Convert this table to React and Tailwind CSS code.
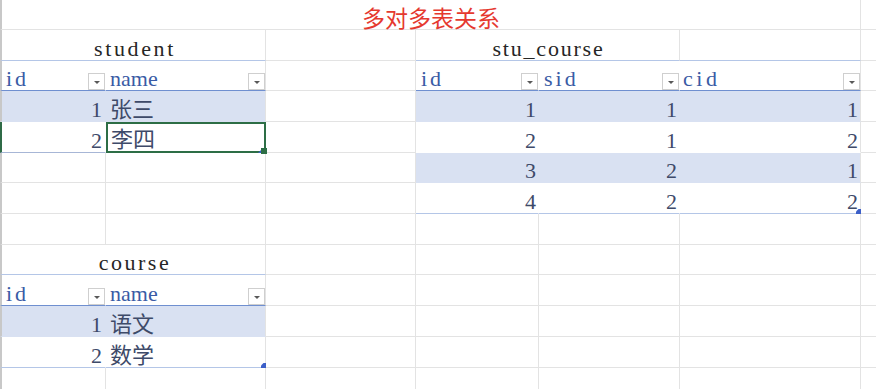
import React from "react";

const L = "border-l-2 border-l-[#c8c8c8]";
const R = "border-r border-r-[#e3e3e3]";
const W = "border-r border-r-white";
const RS = "border-r border-r-[#d9e1f2]";
const B = "border-b border-b-[#e3e3e3]";
const BW = "border-b border-b-white";
const BS = "border-b border-b-[#d9e1f2]";
const BT = "border-b border-b-[#b4c6e7]";
const BH = "border-b border-b-[#6f8fd0]";
const STRIPE = "bg-[#d9e1f2]";
const HEAD = "text-[#3a5ba5]";
const DATA = "text-[#3e4a69]";

function C({ className = "", children }) {
  return <div className={`relative flex items-end ${className}`}>{children}</div>;
}

function DD() {
  return (
    <div className="w-[17px] h-[17px] shrink-0 bg-white border border-[#cfcfcf] flex items-center justify-center">
      <div className="w-0 h-0 mt-[2px] border-l-[3px] border-r-[3px] border-t-[3px] border-l-transparent border-r-transparent border-t-[#595959]" />
    </div>
  );
}

function Handle() {
  return (
    <div className="absolute -right-[1px] -bottom-[1px] w-[5px] h-[5px] bg-[#3c5fc8] [clip-path:polygon(50%_0,100%_0,100%_100%,0_100%,0_50%)]" />
  );
}

function Head({ className, label, track, pad }) {
  return (
    <C className={`${className} ${BH} justify-between ${pad}`}>
      <span className={`${HEAD} ${track}`}>{label}</span>
      <DD />
    </C>
  );
}

export default function App() {
  return (
    <div className="w-[876px] h-[389px] overflow-hidden bg-white font-['Liberation_Serif','Noto_Sans_CJK_SC',serif] text-[22px] leading-none">
      <div className="grid grid-cols-[106px_160px_150px_123px_141px_181px_15px] grid-rows-[30px_31px_30px_31px_31px_30px_31px_31px_30px_31px_31px_31px_21px]">
        {/* Row 1 */}
        <C className={`col-span-6 ${L} ${R} ${B} items-center justify-center`}>
          <span className="font-['Noto_Sans_CJK_SC',sans-serif] text-[23px] text-[#e5392f]">多对多表关系</span>
        </C>
        <C className={B} />

        {/* Row 2 */}
        <C className={`col-span-2 ${L} ${R} ${BT} justify-center pl-[3px] text-[#262626]`}>
          <span className="tracking-[2.6px]">student</span>
        </C>
        <C className={`${R} ${B}`} />
        <C className={`col-span-2 ${R} ${BT} justify-center pl-[2px] text-[#262626]`}>
          <span className="tracking-[1.8px]">stu_course</span>
        </C>
        <C className={`${R} ${BT}`} />
        <C className={B} />

        {/* Row 3 header */}
        <Head className={`${L} ${W}`} label="id" track="tracking-[3px]" pad="pl-[4px]" />
        <Head className={R} label="name" track="" pad="pl-[4px]" />
        <C className={`${R} ${B}`} />
        <Head className={W} label="id" track="tracking-[3px]" pad="pl-[5px]" />
        <Head className={W} label="sid" track="tracking-[3px]" pad="pl-[5px]" />
        <Head className={R} label="cid" track="tracking-[3.5px]" pad="pl-[3px]" />
        <C className={B} />

        {/* Row 4 */}
        <C className={`${L} ${RS} ${BS} ${STRIPE} ${DATA} justify-end pr-[3px]`}>1</C>
        <C className={`${R} ${BS} ${STRIPE} ${DATA} pl-[4px]`}>张三</C>
        <C className={`${R} ${B}`} />
        <C className={`${RS} ${BS} ${STRIPE} ${DATA} justify-end pr-[2px]`}>1</C>
        <C className={`${RS} ${BS} ${STRIPE} ${DATA} justify-end pr-[2px]`}>1</C>
        <C className={`${R} ${BS} ${STRIPE} ${DATA} justify-end pr-[2px]`}>1</C>
        <C className={B} />

        {/* Row 5 */}
        <C className={`border-l-2 border-l-[#2f6b47] ${W} border-b border-b-[#a7b6d6] ${DATA} justify-end pr-[3px]`}>2</C>
        <C className={`border-2 border-[#2d6e46] ${DATA} pl-[3px]`}>
          李四
          <div className="absolute right-[2px] -bottom-[2px] w-[4px] h-[4px] bg-[#3c5fc8] [clip-path:polygon(100%_0,100%_100%,0_100%)]" />
          <div className="absolute -right-[3px] -bottom-[3px] w-[6px] h-[6px] bg-[#2d6e46] z-10" />
        </C>
        <C className={`${R} ${B}`} />
        <C className={`${W} ${BW} ${DATA} justify-end pr-[2px]`}>2</C>
        <C className={`${W} ${BW} ${DATA} justify-end pr-[2px]`}>1</C>
        <C className={`${R} ${BW} ${DATA} justify-end pr-[2px]`}>2</C>
        <C className={B} />

        {/* Row 6 */}
        <C className={`${L} ${R} ${B}`} />
        <C className={`${R} ${B}`} />
        <C className={`${R} ${B}`} />
        <C className={`${RS} ${BS} ${STRIPE} ${DATA} justify-end pr-[2px]`}>3</C>
        <C className={`${RS} ${BS} ${STRIPE} ${DATA} justify-end pr-[2px]`}>2</C>
        <C className={`${R} ${BS} ${STRIPE} ${DATA} justify-end pr-[2px]`}>1</C>
        <C className={B} />

        {/* Row 7 */}
        <C className={`${L} ${R} ${B}`} />
        <C className={`${R} ${B}`} />
        <C className={`${R} ${B}`} />
        <C className={`${W} ${BT} ${DATA} justify-end pr-[2px]`}>4</C>
        <C className={`${W} ${BT} ${DATA} justify-end pr-[2px]`}>2</C>
        <C className={`${R} ${BT} ${DATA} justify-end pr-[2px]`}>
          2
          <Handle />
        </C>
        <C className={B} />

        {/* Row 8 */}
        <C className={`${L} ${R} ${B}`} />
        <C className={`${R} ${B}`} />
        <C className={`${R} ${B}`} />
        <C className={`${R} ${B}`} />
        <C className={`${R} ${B}`} />
        <C className={`${R} ${B}`} />
        <C className={B} />

        {/* Row 9 */}
        <C className={`col-span-2 ${L} ${R} ${BT} justify-center pl-[3px] text-[#262626]`}>
          <span className="tracking-[2.5px]">course</span>
        </C>
        <C className={`${R} ${B}`} />
        <C className={`${R} ${B}`} />
        <C className={`${R} ${B}`} />
        <C className={`${R} ${B}`} />
        <C className={B} />

        {/* Row 10 header */}
        <Head className={`${L} ${W}`} label="id" track="tracking-[3px]" pad="pl-[4px]" />
        <Head className={R} label="name" track="" pad="pl-[4px]" />
        <C className={`${R} ${B}`} />
        <C className={`${R} ${B}`} />
        <C className={`${R} ${B}`} />
        <C className={`${R} ${B}`} />
        <C className={B} />

        {/* Row 11 */}
        <C className={`${L} ${RS} ${BS} ${STRIPE} ${DATA} justify-end pr-[3px]`}>1</C>
        <C className={`${R} ${BS} ${STRIPE} ${DATA} pl-[4px]`}>语文</C>
        <C className={`${R} ${B}`} />
        <C className={`${R} ${B}`} />
        <C className={`${R} ${B}`} />
        <C className={`${R} ${B}`} />
        <C className={B} />

        {/* Row 12 */}
        <C className={`${L} ${W} ${BT} ${DATA} justify-end pr-[3px]`}>2</C>
        <C className={`${R} ${BT} ${DATA} pl-[4px]`}>
          数学
          <Handle />
        </C>
        <C className={`${R} ${B}`} />
        <C className={`${R} ${B}`} />
        <C className={`${R} ${B}`} />
        <C className={`${R} ${B}`} />
        <C className={B} />

        {/* Row 13 */}
        <C className={`${L} ${R}`} />
        <C className={R} />
        <C className={R} />
        <C className={R} />
        <C className={R} />
        <C className={R} />
        <C />
      </div>
    </div>
  );
}
